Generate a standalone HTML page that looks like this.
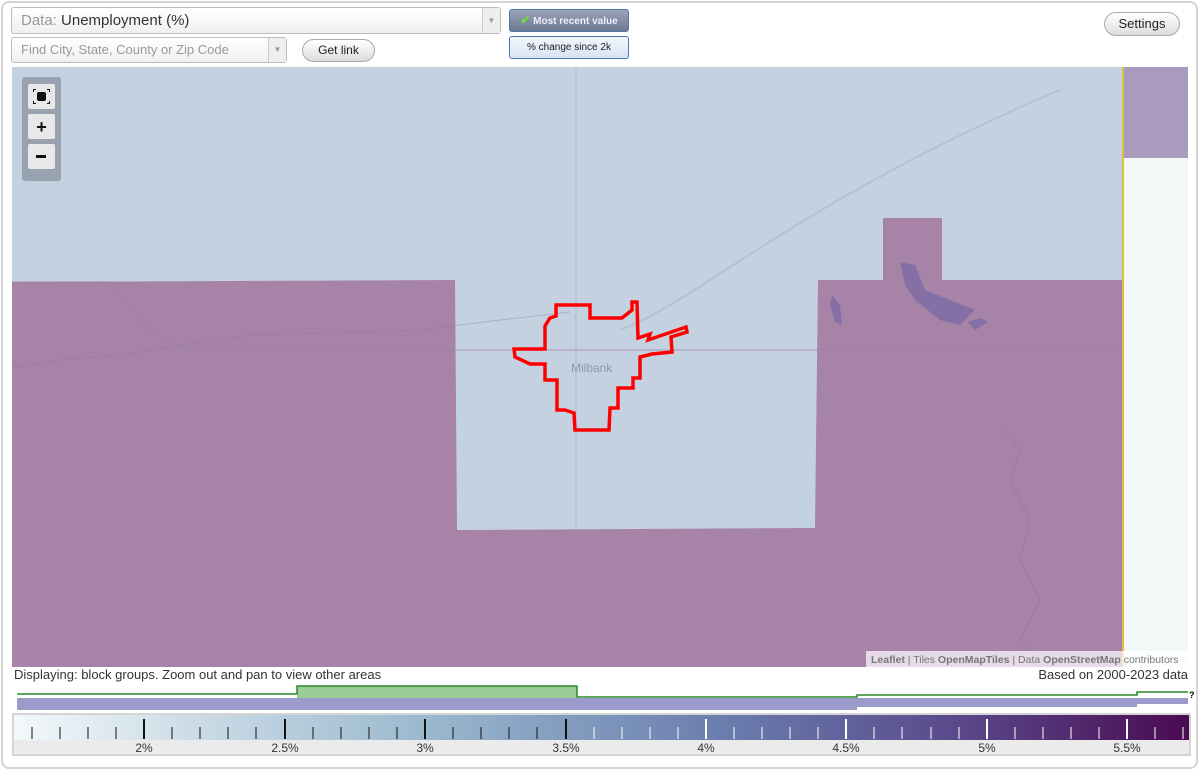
<!DOCTYPE html>
<html><head><meta charset="utf-8"><style>
*{box-sizing:border-box}
body{margin:0;width:1200px;height:771px;background:#fff;font-family:"Liberation Sans",Arial,sans-serif;overflow:hidden;position:relative}
.frame{position:absolute;left:1px;top:1px;width:1197px;height:768px;border:2px solid #d4d4d4;border-radius:8px}
.sel{position:absolute;border:1px solid #bbb;border-radius:3px;background:linear-gradient(#fff,#f0f0f0);color:#999;font-size:13px;padding-left:9px;line-height:24px}
.sel .arr{position:absolute;right:0;top:0;bottom:0;width:18px;border-left:1px solid #ccc;background:#eee;color:#999;font-size:8px;text-align:center}
.btn{position:absolute;border:1px solid #aaa;border-radius:12px;background:linear-gradient(#fff,#ddd);font-size:12px;color:#222;text-align:center}
.tog{position:absolute;border:1px solid #4a78b0;border-radius:3px;font-size:10px;text-align:center}
</style></head><body>
<div class="frame"></div>
<div class="sel" style="left:11px;top:7px;width:490px;height:27px;font-size:15px;line-height:25px">Data: <span style="color:#333">Unemployment (%)</span><div class="arr" style="line-height:25px">▼</div></div>
<div class="sel" style="left:11px;top:37px;width:276px;height:26px;font-size:13px">Find City, State, County or Zip Code<div class="arr">▼</div></div>
<div class="btn" style="left:302px;top:39px;width:73px;height:23px;line-height:21px">Get link</div>
<div class="tog" style="left:509px;top:9px;width:120px;height:23px;background:linear-gradient(#9aa3b8,#6e7891);color:#eef;font-weight:bold;line-height:21px"><span style="color:#7d4;font-size:12px">✔</span> Most recent value</div>
<div class="tog" style="left:509px;top:36px;width:120px;height:23px;background:linear-gradient(#f2f6fb,#d8e4f2);color:#222;line-height:21px">% change since 2k</div>
<div class="btn" style="left:1104px;top:12px;width:76px;height:24px;line-height:22px;font-size:13px">Settings</div>

<svg style="position:absolute;left:0;top:0" width="1200" height="771">
<defs><clipPath id="m"><rect x="12" y="67" width="1176" height="600"/></clipPath></defs>
<g clip-path="url(#m)">
<rect x="12" y="67" width="1176" height="600" fill="#a783a7"/>
<rect x="1123" y="158" width="65" height="509" fill="#f3f7f7"/>
<rect x="1123" y="67" width="65" height="91" fill="#a89bbd"/>
<polygon points="12,67 1122,67 1122,280 942,280 942,218 883,218 883,280 818,280 815,528 457,530 455,280 12,282" fill="#c3d1e0"/>
<line x1="1123" y1="67" x2="1123" y2="667" stroke="#e0c040" stroke-width="2"/>
<path d="M12,282 L110,282 150,330 185,350 1122,350" stroke="#9a84a4" stroke-width="1.5" fill="none" opacity=".5"/>
<path d="M12,368 60,360 120,355 180,345 250,335 330,333 420,330 500,320 570,312" stroke="#8e78a0" fill="none" opacity=".4"/>
<path d="M620,330 C700,300 800,200 1060,90" stroke="#b5c2d0" stroke-width="2" fill="none"/>
<line x1="576" y1="67" x2="576" y2="667" stroke="#9a8aa8" opacity=".35"/>
<path d="M900,262 915,265 925,290 950,300 975,310 960,325 940,320 915,300 905,285Z" fill="#8570a6"/>
<path d="M832,295 840,305 842,325 835,322 830,305Z" fill="#8570a6"/>
<path d="M968,322 980,318 988,322 975,330Z" fill="#8570a6"/>
<path d="M1005,430 1020,450 1010,480 1030,520 1020,560 1040,600 1020,640 1050,667" stroke="#8e78a0" fill="none" opacity=".5"/>
<polygon points="556,305 590,305 590,318 622,318 632,310 632,302 637,302 638,338 650,334 648,340 686,327 687,332 671,337 672,352 652,354 640,357 640,378 633,378 633,388 618,388 618,408 610,408 609,430 575,430 574,413 565,410 557,410 557,380 545,380 545,364 530,364 515,357 514,349 545,349 545,326 550,318 556,316" fill="none" stroke="#f00" stroke-width="3.5"/>
<text x="571" y="372" font-size="12" fill="#8a9ab0">Milbank</text>
<rect x="866" y="651" width="322" height="16" fill="#fff" opacity=".7"/>
<text x="871" y="663" font-size="10.5" fill="#777"><tspan font-weight="bold">Leaflet</tspan> | Tiles <tspan font-weight="bold">OpenMapTiles</tspan> | Data <tspan font-weight="bold">OpenStreetMap</tspan> contributors</text>
</g>
<rect x="22" y="77" width="39" height="104" rx="3" fill="#8d97a3" opacity=".8"/>
<rect x="28" y="84" width="27" height="25" rx="2" fill="#e8e8e8"/>
<rect x="28" y="114" width="27" height="25" rx="2" fill="#e8e8e8"/>
<rect x="28" y="144" width="27" height="25" rx="2" fill="#e8e8e8"/>
<rect x="37" y="92" width="9" height="9" rx="2" fill="#111"/>
<path d="M33,89h3v1h-2v2h-1zM50,89h-3v1h2v2h1zM33,104h3v-1h-2v-2h-1zM50,104h-3v-1h2v-2h1z" fill="#111"/>
<text x="41.5" y="133" font-size="18" font-weight="bold" text-anchor="middle" fill="#111">+</text>
<rect x="36" y="155" width="10" height="3" fill="#111"/>
<text x="14" y="679" font-size="13" fill="#333">Displaying: block groups. Zoom out and pan to view other areas</text>
<text x="1188" y="679" font-size="13" fill="#333" text-anchor="end">Based on 2000-2023 data</text>
<rect x="297" y="686" width="280" height="12" fill="#9ccc96"/>
<path d="M17,694 H297 V686 H577 V697 H857 V695 H1137 V692 H1188" stroke="#2a8a2a" stroke-width="1.5" fill="none"/>
<rect x="17" y="698" width="840" height="12" fill="#9a9acb"/>
<rect x="857" y="698" width="280" height="9" fill="#9a9acb"/>
<rect x="1137" y="698" width="51" height="6" fill="#9a9acb"/>
<text x="1189" y="698" font-size="9" font-weight="bold">?</text>
<defs><linearGradient id="g" x1="0" x2="1"><stop offset="0" stop-color="#f2f8fa"/><stop offset=".35" stop-color="#9ab8ce"/><stop offset=".6" stop-color="#6a7eae"/><stop offset=".8" stop-color="#5a4a8c"/><stop offset="1" stop-color="#4a0a52"/></linearGradient></defs>
<rect x="12" y="713" width="1179" height="43" fill="#d4d4d4"/>
<rect x="14" y="715" width="1175" height="25" fill="url(#g)"/>
<rect x="14" y="740" width="1175" height="14" fill="#ebebeb"/>
<g stroke="#111" stroke-width="1"><path d="M32,727V739M60,727V739M88,727V739M116,727V739M172,727V739M200,727V739M228,727V739M256,727V739M313,727V739M341,727V739M369,727V739M397,727V739M453,727V739M481,727V739M509,727V739M537,727V739"/></g>
<g stroke="#111" stroke-width="2"><path d="M144,719V739M285,719V739M425,719V739M566,719V739"/></g>
<g stroke="#fff" stroke-width="1"><path d="M594,727V739M622,727V739M650,727V739M678,727V739M734,727V739M762,727V739M790,727V739M818,727V739M874,727V739M902,727V739M931,727V739M959,727V739M1015,727V739M1043,727V739M1071,727V739M1099,727V739M1155,727V739M1183,727V739"/></g>
<g stroke="#fff" stroke-width="2"><path d="M706,719V739M846,719V739M987,719V739M1127,719V739"/></g>
<g font-size="12" fill="#333" text-anchor="middle"><text x="144" y="752">2%</text><text x="285" y="752">2.5%</text><text x="425" y="752">3%</text><text x="566" y="752">3.5%</text><text x="706" y="752">4%</text><text x="846" y="752">4.5%</text><text x="987" y="752">5%</text><text x="1127" y="752">5.5%</text></g>
</svg>
</body></html>
